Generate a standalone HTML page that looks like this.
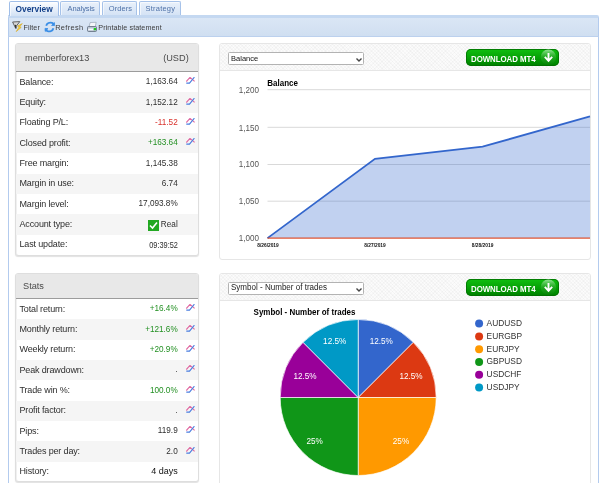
<!DOCTYPE html>
<html><head><meta charset="utf-8">
<style>
html,body{margin:0;padding:0;width:600px;height:483px;overflow:hidden;background:#fff;font-family:"Liberation Sans",sans-serif;}
#wrap{position:absolute;left:0;top:0;width:600px;height:483px;overflow:hidden;will-change:transform;}
.a{position:absolute;}
.tab{position:absolute;top:1px;height:14px;border:1px solid #a6c2e9;border-bottom:none;border-radius:2px 2px 0 0;background:linear-gradient(#e9f1fb,#d5e3f5);box-shadow:inset 1px 1px 0 rgba(255,255,255,0.6);box-sizing:border-box;font-size:7.5px;color:#4f72a8;}
.tab span{position:absolute;top:1.6px;letter-spacing:0.2px;line-height:9px;}
.tb{position:absolute;left:8px;top:15px;width:591px;height:22px;box-sizing:border-box;border-left:1px solid #b3cbee;border-right:1px solid #b3cbee;border-top:3px solid #c4d8f1;border-bottom:1px solid #bcd1ee;border-top-right-radius:2px;background:linear-gradient(#dae6f5,#d0dff1);}
.body{position:absolute;left:8px;top:37px;width:591px;height:460px;box-sizing:border-box;border-left:1px solid #b3cbee;border-right:1px solid #b3cbee;background:#fff;}
.lp{position:absolute;left:15px;width:184px;box-sizing:border-box;border:1px solid #dedede;border-radius:3px;box-shadow:0 1px 1px rgba(0,0,0,.12),inset 1px 0 0 #f0f0f0;background:#fff;overflow:hidden;}
.lph{position:absolute;left:0;top:0;width:100%;background:#e8e8e8;border-bottom:1px solid #9c9c9c;font-size:9.2px;color:#4a4a4a;line-height:11px;}
.row{position:absolute;left:0;width:100%;height:20.33px;font-size:9px;color:#2e2e2e;}
.row.g{background:#f5f5f5;}
.row .l{position:absolute;left:3.5px;top:4.5px;letter-spacing:-0.15px;line-height:10px;}
.row .v{position:absolute;right:20.3px;top:5.4px;text-align:right;font-size:8.2px;line-height:10px;}
.row .ic{position:absolute;left:170px;top:5.3px;width:10px;height:8px;}
.grn{color:#239023;}
.red{color:#d9312b;}
.rp{position:absolute;left:219px;width:372px;box-sizing:border-box;border:1px solid #e6e6e6;border-radius:3px;background:#fff;overflow:hidden;}
.rph{position:absolute;left:0;top:0;width:100%;height:26px;border-bottom:1px solid #e6e6e6;background:repeating-linear-gradient(45deg,rgba(0,0,0,0.025) 0 1px,transparent 1px 2.5px),repeating-linear-gradient(-45deg,rgba(0,0,0,0.02) 0 1px,transparent 1px 2.5px),#fbfbfb;}
.sel{position:absolute;left:8.3px;top:8px;width:136px;height:12.5px;box-sizing:border-box;border:1px solid #b3b3b3;border-radius:1.5px;background:#fff;font-size:7px;color:#222;}
.sel span{position:absolute;left:1.8px;top:0.7px;line-height:9px;}
.btn{position:absolute;left:246px;top:5px;width:93.2px;height:16.8px;border-radius:5px;background:linear-gradient(#10c010,#08a808 40%,#008a00 85%,#007a00);box-shadow:inset 0 0 0 1px rgba(0,110,0,0.8);color:#fff;font-weight:bold;font-size:8.1px;overflow:hidden;}
</style></head><body><div id="wrap">

<!-- tabs -->
<div class="tab" style="left:9px;width:50px;height:15px;border-color:#a0bee8;background:linear-gradient(#fcfdff,#e4edf9 60%,#d2e1f4);color:#15428b;font-weight:bold;font-size:8px;z-index:3"><span style="left:5.5px;top:3.2px;letter-spacing:0;font-size:8.4px">Overview</span></div>
<div class="tab" style="left:60px;width:40px"><span style="left:6.6px;letter-spacing:-0.1px">Analysis</span></div>
<div class="tab" style="left:102px;width:35px"><span style="left:5.8px;letter-spacing:0.05px">Orders</span></div>
<div class="tab" style="left:139px;width:42px"><span style="left:5.6px">Strategy</span></div>

<!-- toolbar -->
<div class="tb"></div>
<div class="a" style="left:23.4px;top:22.5px;font-size:7.2px;color:#3c3c3c;letter-spacing:0.1px">Filter</div>
<div class="a" style="left:55.2px;top:22.5px;font-size:7.4px;color:#3c3c3c;letter-spacing:0.35px">Refresh</div>
<div class="a" style="left:98.3px;top:22.5px;font-size:7.2px;color:#3c3c3c;letter-spacing:0.08px">Printable statement</div>
<!-- filter icon -->
<svg class="a" style="left:10px;top:19px" width="16" height="16" viewBox="0 0 16 16">
<path d="M2.6 3 L9.8 2.6 L6.2 7.2 L5.6 9.2 Z" fill="#d8d8d8" stroke="#555" stroke-width="0.9" stroke-linejoin="round"/>
<path d="M5.4 5.8 L6 9.5" stroke="#333" stroke-width="1.3"/>
<path d="M12.3 4.6 L7.4 7 L9.2 7.8 L6.2 12.6 L11.2 8.4 L9.8 7.6 Z" fill="#f5d23a" stroke="#d9a820" stroke-width="0.6" stroke-linejoin="round"/>
</svg>
<!-- refresh icon -->
<svg class="a" style="left:42px;top:19px" width="16" height="16" viewBox="0 0 16 16">
<path d="M4.2 6.8 C4.8 4.2 7.6 3 10 3.8 C10.8 4.1 11.3 4.6 11.6 5" stroke="#3a8ee6" stroke-width="1.8" fill="none"/>
<path d="M9.6 6.4 L12.6 6.6 L12.4 3.6 Z" fill="#3a8ee6" stroke="#3a8ee6" stroke-width="0.8" stroke-linejoin="round"/>
<path d="M11.4 9.2 C10.8 11.8 8 13 5.6 12.2 C4.8 11.9 4.3 11.4 4 11" stroke="#3a8ee6" stroke-width="1.8" fill="none"/>
<path d="M6 9.6 L3 9.4 L3.2 12.4 Z" fill="#3a8ee6" stroke="#3a8ee6" stroke-width="0.8" stroke-linejoin="round"/>
</svg>
<!-- printer icon -->
<svg class="a" style="left:84px;top:19px" width="16" height="16" viewBox="0 0 16 16">
<path d="M6.2 3.5 L12.2 3.3 L11.2 8 L5 8 Z" fill="#f4f6fa" stroke="#8a97a8" stroke-width="0.6"/>
<rect x="3.5" y="7.5" width="9" height="5" rx="1" fill="#b9c4d2" stroke="#5e6b7c" stroke-width="0.8"/>
<rect x="4.2" y="9.6" width="5" height="1.6" fill="#f7f9fc"/>
<rect x="9.8" y="9" width="2.2" height="2.2" fill="#19d019"/>
</svg>

<div class="body"></div>

<!-- left panel 1 -->
<div class="lp" style="top:43px;height:213px;">
  <div class="lph" style="height:27px;"><span class="a" style="left:9px;top:8.6px">memberforex13</span><span class="a" style="right:9.3px;top:8.6px">(USD)</span></div>
  <div class="row" style="top:28px"><span class="l">Balance:</span><span class="v">1,163.64</span><svg class="ic" viewBox="0 0 10 8"><path d="M0.6 4.8 L0.7 4 L4 0.4 L8.6 4.4" stroke="#e06aa2" stroke-width="1.15" fill="none"/><path d="M0.3 6.1 L3.5 6.1 L8.4 0.2" stroke="#4a7ee0" stroke-width="1.15" fill="none"/></svg></div>
  <div class="row g" style="top:48.33px"><span class="l">Equity:</span><span class="v">1,152.12</span><svg class="ic" viewBox="0 0 10 8"><path d="M0.6 4.8 L0.7 4 L4 0.4 L8.6 4.4" stroke="#e06aa2" stroke-width="1.15" fill="none"/><path d="M0.3 6.1 L3.5 6.1 L8.4 0.2" stroke="#4a7ee0" stroke-width="1.15" fill="none"/></svg></div>
  <div class="row" style="top:68.67px"><span class="l">Floating P/L:</span><span class="v red">-11.52</span><svg class="ic" viewBox="0 0 10 8"><path d="M0.6 4.8 L0.7 4 L4 0.4 L8.6 4.4" stroke="#e06aa2" stroke-width="1.15" fill="none"/><path d="M0.3 6.1 L3.5 6.1 L8.4 0.2" stroke="#4a7ee0" stroke-width="1.15" fill="none"/></svg></div>
  <div class="row g" style="top:89px"><span class="l">Closed profit:</span><span class="v grn">+163.64</span><svg class="ic" viewBox="0 0 10 8"><path d="M0.6 4.8 L0.7 4 L4 0.4 L8.6 4.4" stroke="#e06aa2" stroke-width="1.15" fill="none"/><path d="M0.3 6.1 L3.5 6.1 L8.4 0.2" stroke="#4a7ee0" stroke-width="1.15" fill="none"/></svg></div>
  <div class="row" style="top:109.33px"><span class="l">Free margin:</span><span class="v">1,145.38</span></div>
  <div class="row g" style="top:129.67px"><span class="l">Margin in use:</span><span class="v">6.74</span></div>
  <div class="row" style="top:150px"><span class="l">Margin level:</span><span class="v">17,093.8%</span></div>
  <div class="row g" style="top:170.33px"><span class="l">Account type:</span><span class="v"><svg style="position:absolute;left:-13.3px;top:0.6px" width="11" height="11" viewBox="0 0 11 11"><rect width="11" height="11" fill="#22a822"/><path d="M2 5.5 L4.5 8 L9 2.5" stroke="#fff" stroke-width="1.6" fill="none"/></svg>Real</span></div>
  <div class="row" style="top:190.67px"><span class="l">Last update:</span><span class="v" style="transform:scaleX(0.9);transform-origin:100% 50%;right:20.2px;top:6.2px">09:39:52</span></div>
</div>

<!-- left panel 2 -->
<div class="lp" style="top:273px;height:209px;">
  <div class="lph" style="height:24px;"><span class="a" style="left:7px;top:6.5px">Stats</span></div>
  <div class="row" style="top:25.00px"><span class="l">Total return:</span><span class="v grn">+16.4%</span><svg class="ic" viewBox="0 0 10 8"><path d="M0.6 4.8 L0.7 4 L4 0.4 L8.6 4.4" stroke="#e06aa2" stroke-width="1.15" fill="none"/><path d="M0.3 6.1 L3.5 6.1 L8.4 0.2" stroke="#4a7ee0" stroke-width="1.15" fill="none"/></svg></div>
  <div class="row g" style="top:45.33px"><span class="l">Monthly return:</span><span class="v grn">+121.6%</span><svg class="ic" viewBox="0 0 10 8"><path d="M0.6 4.8 L0.7 4 L4 0.4 L8.6 4.4" stroke="#e06aa2" stroke-width="1.15" fill="none"/><path d="M0.3 6.1 L3.5 6.1 L8.4 0.2" stroke="#4a7ee0" stroke-width="1.15" fill="none"/></svg></div>
  <div class="row" style="top:65.67px"><span class="l">Weekly return:</span><span class="v grn">+20.9%</span><svg class="ic" viewBox="0 0 10 8"><path d="M0.6 4.8 L0.7 4 L4 0.4 L8.6 4.4" stroke="#e06aa2" stroke-width="1.15" fill="none"/><path d="M0.3 6.1 L3.5 6.1 L8.4 0.2" stroke="#4a7ee0" stroke-width="1.15" fill="none"/></svg></div>
  <div class="row g" style="top:86.00px"><span class="l">Peak drawdown:</span><span class="v" style="width:1.6px;height:1.2px;background:#666;top:11px;right:20.6px"></span><svg class="ic" viewBox="0 0 10 8"><path d="M0.6 4.8 L0.7 4 L4 0.4 L8.6 4.4" stroke="#e06aa2" stroke-width="1.15" fill="none"/><path d="M0.3 6.1 L3.5 6.1 L8.4 0.2" stroke="#4a7ee0" stroke-width="1.15" fill="none"/></svg></div>
  <div class="row" style="top:106.33px"><span class="l">Trade win %:</span><span class="v grn">100.0%</span><svg class="ic" viewBox="0 0 10 8"><path d="M0.6 4.8 L0.7 4 L4 0.4 L8.6 4.4" stroke="#e06aa2" stroke-width="1.15" fill="none"/><path d="M0.3 6.1 L3.5 6.1 L8.4 0.2" stroke="#4a7ee0" stroke-width="1.15" fill="none"/></svg></div>
  <div class="row g" style="top:126.67px"><span class="l">Profit factor:</span><span class="v" style="width:1.6px;height:1.2px;background:#666;top:11px;right:20.6px"></span><svg class="ic" viewBox="0 0 10 8"><path d="M0.6 4.8 L0.7 4 L4 0.4 L8.6 4.4" stroke="#e06aa2" stroke-width="1.15" fill="none"/><path d="M0.3 6.1 L3.5 6.1 L8.4 0.2" stroke="#4a7ee0" stroke-width="1.15" fill="none"/></svg></div>
  <div class="row" style="top:147.00px"><span class="l">Pips:</span><span class="v">119.9</span><svg class="ic" viewBox="0 0 10 8"><path d="M0.6 4.8 L0.7 4 L4 0.4 L8.6 4.4" stroke="#e06aa2" stroke-width="1.15" fill="none"/><path d="M0.3 6.1 L3.5 6.1 L8.4 0.2" stroke="#4a7ee0" stroke-width="1.15" fill="none"/></svg></div>
  <div class="row g" style="top:167.33px"><span class="l">Trades per day:</span><span class="v">2.0</span><svg class="ic" viewBox="0 0 10 8"><path d="M0.6 4.8 L0.7 4 L4 0.4 L8.6 4.4" stroke="#e06aa2" stroke-width="1.15" fill="none"/><path d="M0.3 6.1 L3.5 6.1 L8.4 0.2" stroke="#4a7ee0" stroke-width="1.15" fill="none"/></svg></div>
  <div class="row" style="top:187.67px"><span class="l">History:</span><span class="v" style="font-size:9px;color:#111;top:4.8px">4 days</span></div>
</div>

<!-- right panel 1 -->
<div class="rp" style="top:43px;height:217px;">
  <div class="rph"></div>
  <div class="sel" style="top:8.4px;font-size:7.5px;color:#111"><span>Balance</span><svg style="position:absolute;left:127px;top:4.5px" width="6" height="4" viewBox="0 0 6 4"><path d="M0.5 0.5 L3 3 L5.5 0.5" stroke="#444" stroke-width="1.4" fill="none"/></svg></div>
  <div class="btn"><span class="a" style="left:4.8px;top:5px;letter-spacing:-0.05px;line-height:10px;font-size:9.1px;transform:scaleX(0.865);transform-origin:0 0">DOWNLOAD MT4</span>
    <svg class="a" style="left:0;top:0" width="94" height="17" viewBox="0 0 94 17"><defs><linearGradient id="cg" x1="0" y1="0" x2="0" y2="1"><stop offset="0" stop-color="#c8f0c8" stop-opacity="0.7"/><stop offset="0.5" stop-color="#50b850" stop-opacity="0.35"/><stop offset="1" stop-color="#108010" stop-opacity="0.3"/></linearGradient></defs><circle cx="82.4" cy="8.3" r="7.7" fill="url(#cg)"/><path d="M82.5 3.9 L82.5 11.8 M78.8 7.9 L82.5 11.8 L86.2 7.9" stroke="#fff" stroke-width="1.9" fill="none"/></svg></div>
</div>
<svg class="a" style="left:0;top:0" width="600" height="483">
  <g stroke="#d9d9d9" stroke-width="1">
    <line x1="267.5" y1="89.7" x2="590" y2="89.7"/>
    <line x1="267.5" y1="127.3" x2="590" y2="127.3"/>
    <line x1="267.5" y1="164.5" x2="590" y2="164.5"/>
    <line x1="267.5" y1="201.2" x2="590" y2="201.2"/>
  </g>
  <path d="M267.5 238.1 L375 158.75 L482.6 146.7 L590 116.3 L590 238.1 Z" fill="#3366cc" fill-opacity="0.3"/>
  <path d="M267.5 238.1 L375 158.75 L482.6 146.7 L590 116.3" stroke="#3366cc" stroke-width="1.8" fill="none"/>
  <line x1="267.5" y1="238.2" x2="590" y2="238.2" stroke="#dc3912" stroke-width="1.3" stroke-opacity="0.85"/>
  <g font-family="Liberation Sans" font-size="8.8" fill="#555">
    <text x="238.8" y="93.2" textLength="20.2" lengthAdjust="spacingAndGlyphs">1,200</text>
    <text x="238.8" y="130.6" textLength="20.2" lengthAdjust="spacingAndGlyphs">1,150</text>
    <text x="238.8" y="167.2" textLength="20.2" lengthAdjust="spacingAndGlyphs">1,100</text>
    <text x="238.8" y="204.3" textLength="20.2" lengthAdjust="spacingAndGlyphs">1,050</text>
    <text x="238.8" y="241.4" textLength="20.2" lengthAdjust="spacingAndGlyphs">1,000</text>
  </g>
  <text x="267.3" y="85.6" font-family="Liberation Sans" font-weight="bold" font-size="8.7" fill="#000" textLength="30.6" lengthAdjust="spacingAndGlyphs">Balance</text>
  <g font-family="Liberation Sans" font-size="5" font-weight="bold" fill="#111" text-anchor="middle">
    <text x="268" y="247" textLength="21.5" lengthAdjust="spacingAndGlyphs">8/26/2019</text>
    <text x="375" y="247" textLength="21.5" lengthAdjust="spacingAndGlyphs">8/27/2019</text>
    <text x="482.6" y="247" textLength="21.5" lengthAdjust="spacingAndGlyphs">8/28/2019</text>
  </g>
</svg>

<!-- right panel 2 -->
<div class="rp" style="top:273px;height:220px;">
  <div class="rph"></div>
  <div class="sel" style="top:8.2px;font-size:8.9px;color:#222"><span style="top:-0.1px;left:2.2px;transform:scaleX(0.905);transform-origin:0 0">Symbol - Number of trades</span><svg style="position:absolute;left:127px;top:4.5px" width="6" height="4" viewBox="0 0 6 4"><path d="M0.5 0.5 L3 3 L5.5 0.5" stroke="#444" stroke-width="1.4" fill="none"/></svg></div>
  <div class="btn"><span class="a" style="left:4.8px;top:5px;letter-spacing:-0.05px;line-height:10px;font-size:9.1px;transform:scaleX(0.865);transform-origin:0 0">DOWNLOAD MT4</span>
    <svg class="a" style="left:0;top:0" width="94" height="17" viewBox="0 0 94 17"><defs><linearGradient id="cg" x1="0" y1="0" x2="0" y2="1"><stop offset="0" stop-color="#c8f0c8" stop-opacity="0.7"/><stop offset="0.5" stop-color="#50b850" stop-opacity="0.35"/><stop offset="1" stop-color="#108010" stop-opacity="0.3"/></linearGradient></defs><circle cx="82.4" cy="8.3" r="7.7" fill="url(#cg)"/><path d="M82.5 3.9 L82.5 11.8 M78.8 7.9 L82.5 11.8 L86.2 7.9" stroke="#fff" stroke-width="1.9" fill="none"/></svg></div>
</div>
<svg class="a" style="left:0;top:0" width="600" height="483">
  <text x="253.6" y="315" font-family="Liberation Sans" font-weight="bold" font-size="8.5" fill="#000" textLength="101.8" lengthAdjust="spacingAndGlyphs">Symbol - Number of trades</text>
  <g stroke="#fff" stroke-width="0.9" stroke-opacity="0.75">
    <path d="M358.2 397.5 L358.2 319.5 A78 78 0 0 1 413.35 342.35 Z" fill="#3366cc"/>
    <path d="M358.2 397.5 L413.35 342.35 A78 78 0 0 1 436.2 397.5 Z" fill="#dc3912"/>
    <path d="M358.2 397.5 L436.2 397.5 A78 78 0 0 1 358.2 475.5 Z" fill="#ff9900"/>
    <path d="M358.2 397.5 L358.2 475.5 A78 78 0 0 1 280.2 397.5 Z" fill="#109618"/>
    <path d="M358.2 397.5 L280.2 397.5 A78 78 0 0 1 303.05 342.35 Z" fill="#990099"/>
    <path d="M358.2 397.5 L303.05 342.35 A78 78 0 0 1 358.2 319.5 Z" fill="#0099c6"/>
  </g>
  <g font-family="Liberation Sans" font-size="8.2" fill="#fff" text-anchor="middle">
    <text x="381.3" y="344">12.5%</text>
    <text x="334.7" y="344">12.5%</text>
    <text x="305" y="378.8">12.5%</text>
    <text x="411" y="378.8">12.5%</text>
    <text x="314.6" y="444">25%</text>
    <text x="401" y="444">25%</text>
  </g>
  <g>
    <circle cx="479.1" cy="323.6" r="4" fill="#3366cc"/>
    <circle cx="479.1" cy="336.4" r="4" fill="#dc3912"/>
    <circle cx="479.1" cy="349.2" r="4" fill="#ff9900"/>
    <circle cx="479.1" cy="362" r="4" fill="#109618"/>
    <circle cx="479.1" cy="374.8" r="4" fill="#990099"/>
    <circle cx="479.1" cy="387.6" r="4" fill="#0099c6"/>
  </g>
  <g font-family="Liberation Sans" font-size="8.4" fill="#333" transform="translate(0,-0.4)">
    <text x="486.6" y="326.5">AUDUSD</text>
    <text x="486.6" y="339.3">EURGBP</text>
    <text x="486.6" y="352.1">EURJPY</text>
    <text x="486.6" y="364.9">GBPUSD</text>
    <text x="486.6" y="377.7">USDCHF</text>
    <text x="486.6" y="390.5">USDJPY</text>
  </g>
</svg>

</div></body></html>
